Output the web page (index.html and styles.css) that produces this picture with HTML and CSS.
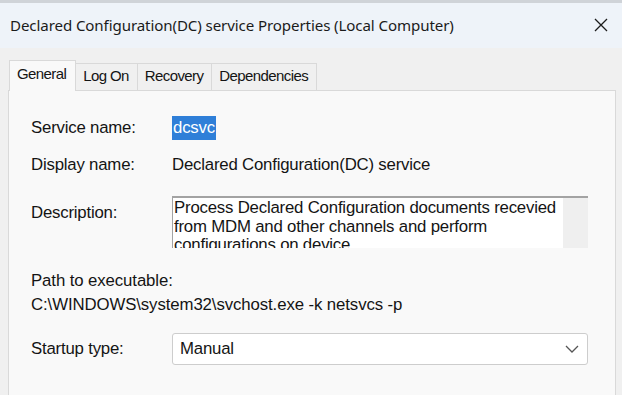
FILE: index.html
```html
<!DOCTYPE html>
<html lang="en">
  <head>
    <meta charset="UTF-8" />
    <title>Declared Configuration(DC) service Properties (Local Computer)</title>
    <link rel="stylesheet" href="styles.css">
  </head>
  <body>
    <div class="window-edge"></div>
    <header class="titlebar">
      <span class="title">Declared Configuration(DC) service Properties (Local Computer)</span>
      <button class="close" type="button" aria-label="Close">
        <svg width="14" height="14" viewBox="0 0 14 14">
          <path d="M1 1 L13 13 M13 1 L1 13" stroke="#1b1b1b" stroke-width="1.3" fill="none" />
        </svg>
      </button>
    </header>

    <main class="dialog">
      <nav class="tabs">
        <span class="tab active">General</span>
        <span class="tab">Log On</span>
        <span class="tab">Recovery</span>
        <span class="tab">Dependencies</span>
      </nav>

      <section class="panel">
        <div class="row first">
          <span class="label">Service name:</span>
          <span class="value"><span class="selected">dcsvc</span></span>
        </div>
        <div class="row">
          <span class="label">Display name:</span>
          <span class="value">Declared Configuration(DC) service</span>
        </div>
        <div class="row desc-row">
          <span class="label">Description:</span>
          <div class="desc-box">
            <div class="desc-text">
              Process Declared Configuration documents recevied from MDM and other channels and perform configurations on device.
            </div>
            <div class="scrollbar"></div>
          </div>
        </div>
        <div class="path">
          <div class="path-label">Path to executable:</div>
          <div class="path-value">C:\WINDOWS\system32\svchost.exe -k netsvcs -p</div>
        </div>
        <div class="row startup-row">
          <span class="label">Startup type:</span>
          <div class="select">
            <span>Manual</span>
            <svg width="14" height="8" viewBox="0 0 14 8">
              <path d="M1 1 L7 7 L13 1" stroke="#555" stroke-width="1.3" fill="none" />
            </svg>
          </div>
        </div>
      </section>
    </main>
  </body>
</html>
```

FILE: styles.css
```css
:root {
  --titlebar: #eef3f9;
  --background: #f0f0f0;
  --panel: #f9f9f9;
  --border: #d9d9d9;
  --text: #141414;
  --selection: #2f7fd8;
}

* {
  margin: 0;
  padding: 0;
  box-sizing: border-box;
}

body {
  font-family: "Liberation Sans", Arial, sans-serif;
  color: var(--text);
  background-color: var(--background);
  width: 622px;
  height: 395px;
  overflow: hidden;
}

.window-edge {
  height: 3px;
  background-color: #cfd3d8;
}

.titlebar {
  height: 45px;
  background-color: var(--titlebar);
  display: flex;
  align-items: center;
  justify-content: space-between;
  padding: 0 14px 0 10px;
}

.title {
  font-family: "Noto Sans", "Open Sans", sans-serif;
  font-size: 15.1px;
  letter-spacing: -0.1px;
  color: #1b1b1b;
  margin-top: -2px;
}

.close {
  background: none;
  border: none;
  display: flex;
  margin-top: -1px;
}

.dialog {
  padding: 12px 6px 0 8px;
}

.tabs {
  display: flex;
  align-items: flex-end;
  padding-left: 1px;
  height: 30px;
}

.tab {
  font-size: 15px;
  letter-spacing: -0.6px;
  height: 27px;
  padding: 3px 8px 0 7px;
  border: 1px solid var(--border);
  border-bottom: none;
  border-left: none;
  background-color: #f0f0f0;
}

.tab.active {
  height: 31px;
  margin-bottom: -1px;
  border-left: 1px solid var(--border);
  background-color: var(--panel);
  padding: 4px 9px 0 7px;
  position: relative;
}

.panel {
  height: 310px;
  background-color: var(--panel);
  border: 1px solid var(--border);
  padding: 26px 0 0 22px;
}

.row {
  display: flex;
  align-items: center;
  height: 22px;
  font-size: 16.8px;
  letter-spacing: -0.2px;
}

.row + .row {
  margin-top: 15px;
}

.label {
  width: 141px;
  flex-shrink: 0;
}

.selected {
  background-color: var(--selection);
  color: #fff;
  padding: 2px 1px 3px;
}

.desc-row.row {
  margin-top: 20px;
  height: 54px;
  align-items: flex-start;
}

.desc-row .label {
  padding-top: 7px;
}

.desc-box {
  width: 416px;
  height: 52px;
  display: flex;
  background-color: #fff;
  border-top: 2px solid #a3a3a3;
  border-left: 1px solid #a3a3a3;
  overflow: hidden;
}

.desc-text {
  flex: 1;
  padding: 1px 0 0 1px;
  line-height: 18.5px;
  font-size: 16.8px;
  letter-spacing: -0.2px;
}

.scrollbar {
  width: 25px;
  background-color: #efefef;
}

.path {
  margin-top: 22px;
  font-size: 16.8px;
  letter-spacing: -0.1px;
  line-height: 18px;
}

.path-value {
  margin-top: 6px;
}

.startup-row.row {
  margin-top: 19px;
  height: 32px;
}

.select {
  width: 416px;
  height: 32px;
  display: flex;
  align-items: center;
  justify-content: space-between;
  background-color: #fff;
  border: 1px solid #cdcdcd;
  border-radius: 3px;
  padding: 0 8px 0 7px;
}
```
